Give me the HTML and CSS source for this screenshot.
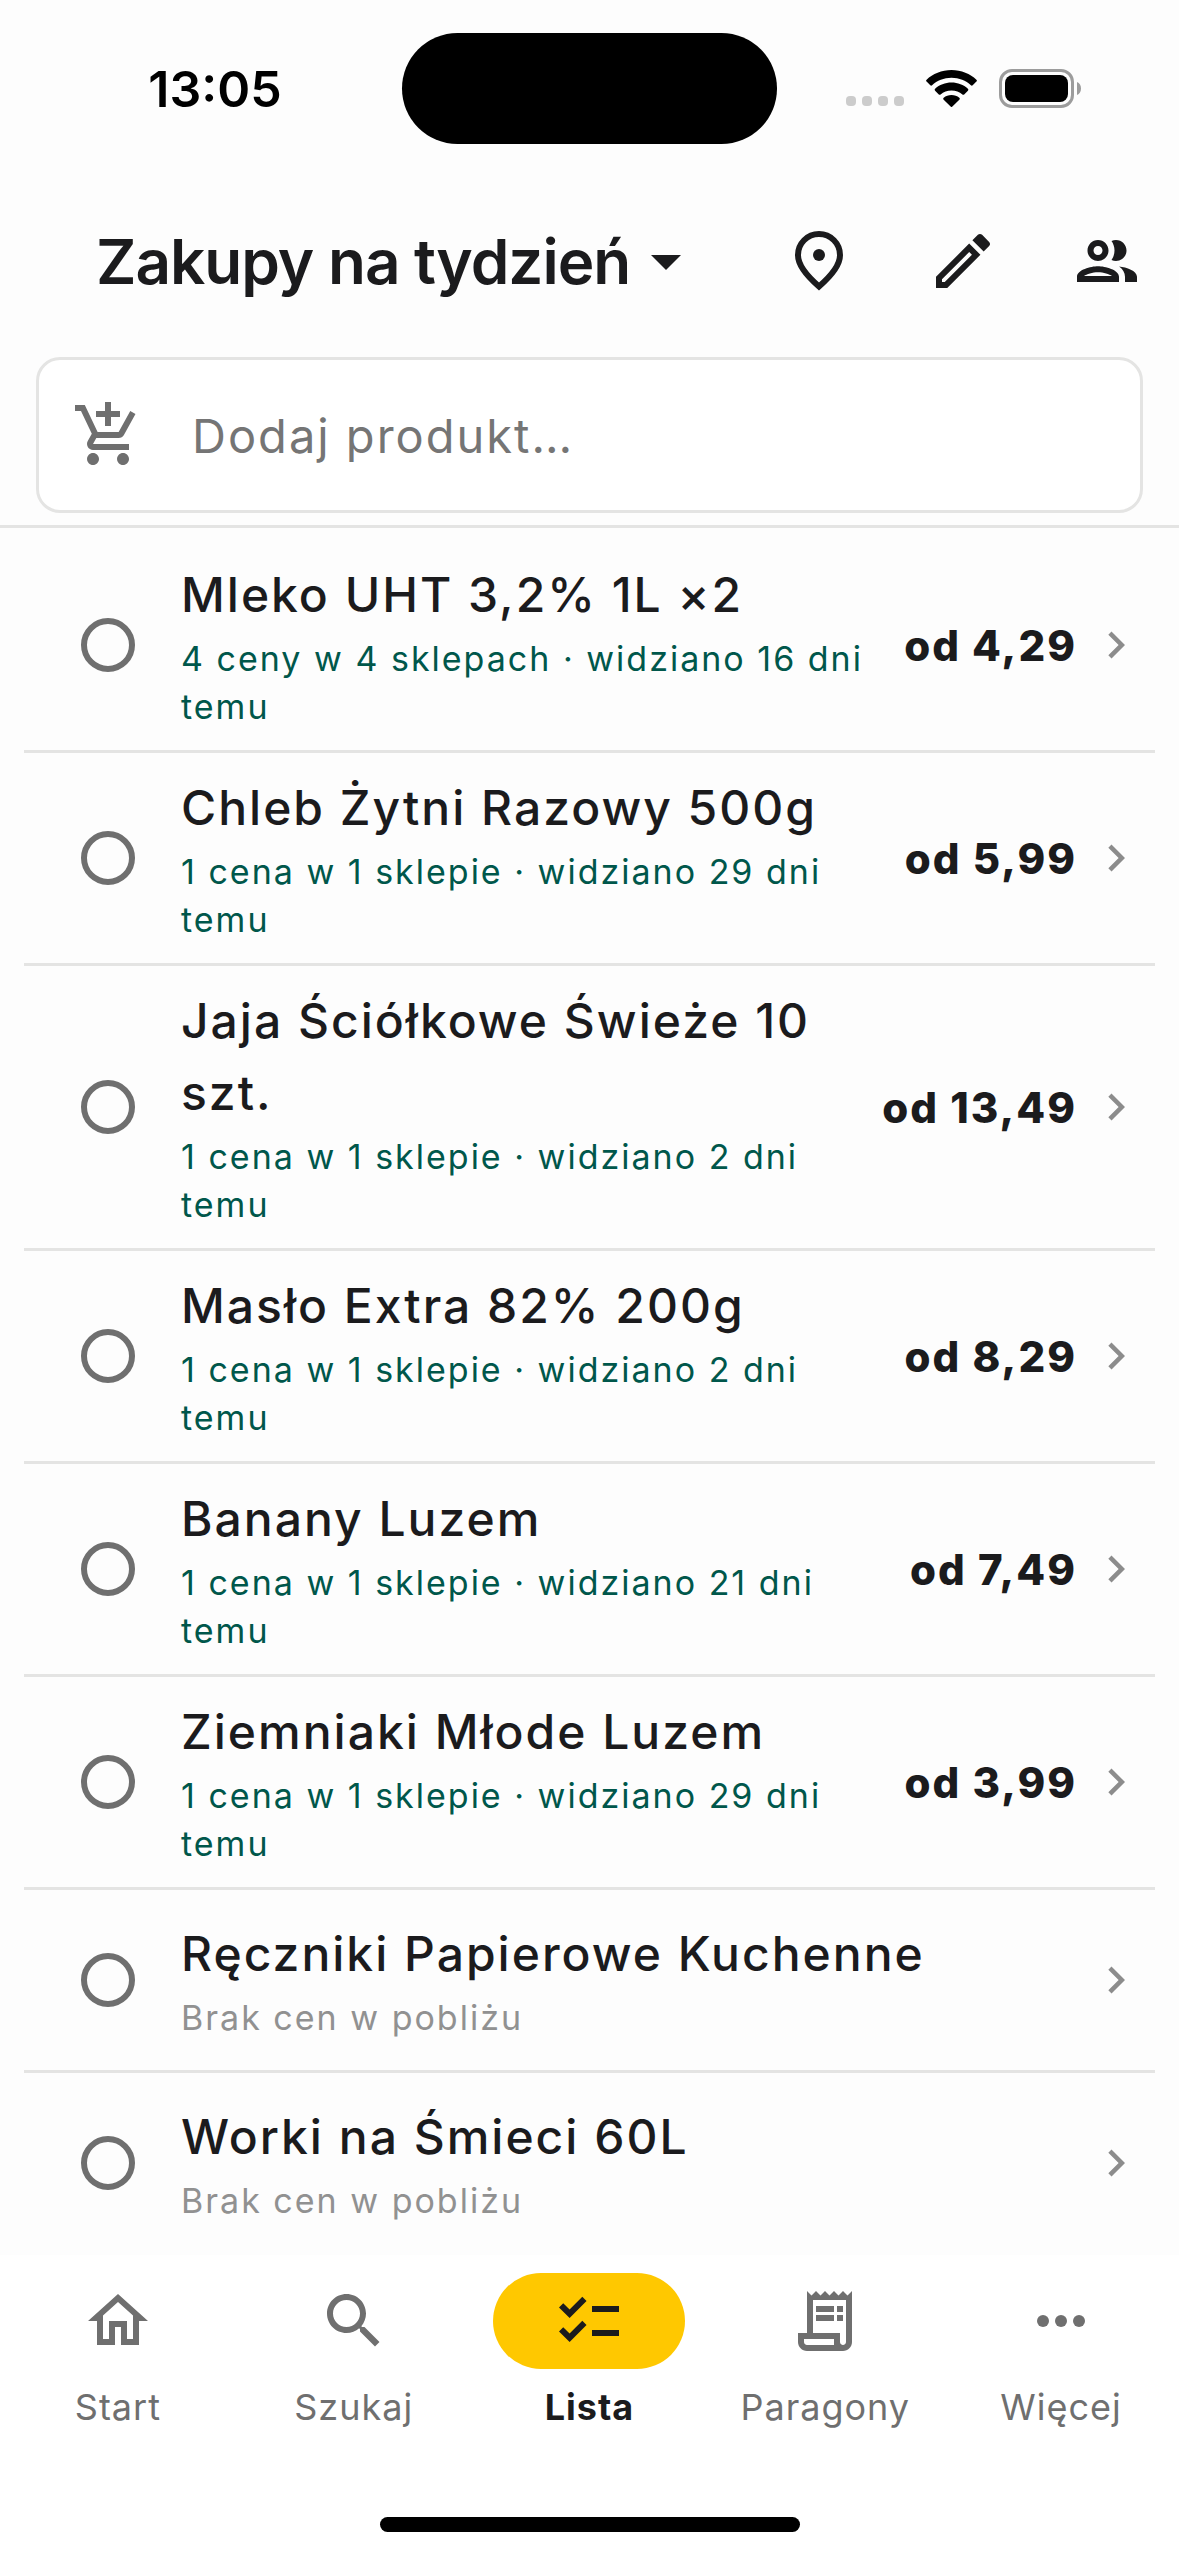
FILE: index.html
```
<!DOCTYPE html>
<html lang="pl">
<head>
  <meta charset="UTF-8">
  <title>Zakupy na tydzień</title>

  <meta name="viewport" content="width=device-width, initial-scale=1">
  <link rel="stylesheet" href="styles.css">
</head>
<body>

  <div class="status-bar">
    <span class="clock">13:05</span>
    <div class="island"></div>
    <div class="status-icons">
      <div class="signal"><i></i><i></i><i></i><i></i></div>
      <svg class="wifi" viewBox="0 0 51 37">
        <path d="M25.500 0C35.300 0 44.300 3.800 50.400 9.700a1.300 1.300 0 0 1 0 1.900l-3.700 3.700a1.300 1.300 0 0 1-1.800 0C39.900 10.600 33.100 7.800 25.500 7.800S11.100 10.600 6.100 15.300a1.300 1.300 0 0 1-1.800 0L.600 11.600a1.300 1.300 0 0 1 0-1.900C6.700 3.800 15.700 0 25.500 0z"/>
        <path d="M25.500 12.600c6.300 0 12.100 2.300 16.400 6.200a1.300 1.300 0 0 1 0 1.900l-3.700 3.700a1.300 1.300 0 0 1-1.800 0c-2.900-2.500-6.700-4-10.900-4s-8 1.500-10.900 4a1.300 1.300 0 0 1-1.800 0l-3.700-3.700a1.300 1.300 0 0 1 0-1.900c4.300-3.900 10.100-6.200 16.400-6.200z"/>
        <path d="M25.500 25c3 0 5.700 1 7.800 2.800a1.300 1.300 0 0 1 0 1.900l-6.900 6.900a1.300 1.300 0 0 1-1.800 0l-6.900-6.900a1.300 1.300 0 0 1 0-1.900c2.100-1.800 4.800-2.800 7.800-2.800z"/>
      </svg>
      <svg class="battery" viewBox="0 0 82 39">
        <rect x="1.500" y="1.500" width="72" height="36" rx="11.500" fill="none" stroke="#9c9c9c" stroke-width="3"/>
        <rect x="6" y="6" width="63" height="27" rx="8"/>
        <path d="M78 13c2.600 1 4 3.500 4 6.500S80.600 25 78 26z" fill="#9c9c9c"/>
      </svg>
    </div>
  </div>

  <header class="app-bar">
    <h1>
      <button class="list-picker">
        Zakupy na tydzień
        <svg class="icon" viewBox="0 0 24 24"><path d="M7 10l5 5 5-5z"/></svg>
      </button>
    </h1>
    <div class="actions">
      <button class="icon-btn" aria-label="Sklepy">
        <svg class="icon" viewBox="0 0 24 24">
          <path d="M12 3a7 7 0 0 1 7 7.100c0 3.100-2.500 6.500-7 10.400c-4.500-3.900-7-7.300-7-10.400A7 7 0 0 1 12 3z" fill="none" stroke="currentColor" stroke-width="2"/>
          <circle cx="12" cy="10" r="2"/>
        </svg>
      </button>
      <button class="icon-btn" aria-label="Edytuj">
        <svg class="icon" viewBox="0 0 24 24"><path d="M14.060 9.020l.92.92L5.920 19H5v-.92l9.060-9.060M17.660 3c-.25 0-.51.1-.7.29l-1.830 1.830 3.750 3.750 1.830-1.830c.39-.39.39-1.020 0-1.410l-2.340-2.340c-.2-.2-.45-.29-.71-.29zm-3.600 3.190L3 17.250V21h3.750L17.810 9.940l-3.750-3.750z"/></svg>
      </button>
      <button class="icon-btn" aria-label="Osoby">
        <svg class="icon" viewBox="0 0 24 24"><path d="M9 13.750c-2.340 0-7 1.170-7 3.500V19h14v-1.750c0-2.330-4.660-3.500-7-3.500zM4.340 17c.84-.58 2.870-1.250 4.660-1.250s3.820.67 4.660 1.250H4.340zM9 12c1.930 0 3.500-1.570 3.500-3.500S10.930 5 9 5 5.500 6.570 5.500 8.500 7.070 12 9 12zm0-5c.83 0 1.500.67 1.500 1.500S9.830 10 9 10s-1.500-.67-1.500-1.500S8.170 7 9 7zm7.040 6.810c1.160.84 1.960 1.960 1.960 3.440V19h4v-1.750c0-2.020-3.500-3.170-5.960-3.440zM15 12c1.930 0 3.500-1.570 3.500-3.500S16.930 5 15 5c-.54 0-1.040.13-1.500.35.63.89 1 1.980 1 3.150s-.37 2.260-1 3.150c.46.22.96.35 1.500.35z"/></svg>
      </button>
    </div>
  </header>

  <form class="add-bar">
    <label class="add-field">
      <svg class="icon" viewBox="0 0 24 24"><path d="M11 9h2V6h3V4h-3V1h-2v3H8v2h3v3zm-4 9c-1.100 0-1.990.9-1.990 2S5.900 22 7 22s2-.9 2-2-.9-2-2-2zm10 0c-1.100 0-1.990.9-1.990 2s.89 2 1.990 2 2-.9 2-2-.9-2-2-2zm-8.900-5h7.450c.75 0 1.410-.41 1.750-1.030l3.860-7.010L19.420 4l-3.870 7H8.530L4.270 2H1v2h2l3.600 7.590-1.350 2.440C4.520 15.370 5.480 17 7 17h12v-2H7l1.100-2z"/></svg>
      <input type="text" placeholder="Dodaj produkt…" aria-label="Dodaj produkt">
    </label>
  </form>

  <main class="list-wrap">
    <ul class="items">
      <li class="item">
        <input type="checkbox" id="item-1">
        <label class="text" for="item-1">
          <span class="name">Mleko UHT 3,2% 1L ×2</span>
          <span class="info">4 ceny w 4 sklepach · widziano 16 dni temu</span>
        </label>
        <span class="price">od 4,29</span>
        <button class="more" aria-label="Szczegóły"><svg viewBox="0 0 24 24"><path d="M10 6L8.590 7.410 13.170 12l-4.580 4.590L10 18l6-6z"/></svg></button>
      </li>
      <li class="item">
        <input type="checkbox" id="item-2">
        <label class="text" for="item-2">
          <span class="name">Chleb Żytni Razowy 500g</span>
          <span class="info">1 cena w 1 sklepie · widziano 29 dni temu</span>
        </label>
        <span class="price">od 5,99</span>
        <button class="more" aria-label="Szczegóły"><svg viewBox="0 0 24 24"><path d="M10 6L8.590 7.410 13.170 12l-4.580 4.590L10 18l6-6z"/></svg></button>
      </li>
      <li class="item">
        <input type="checkbox" id="item-3">
        <label class="text" for="item-3">
          <span class="name">Jaja Ściółkowe Świeże 10 szt.</span>
          <span class="info">1 cena w 1 sklepie · widziano 2 dni temu</span>
        </label>
        <span class="price">od 13,49</span>
        <button class="more" aria-label="Szczegóły"><svg viewBox="0 0 24 24"><path d="M10 6L8.590 7.410 13.170 12l-4.580 4.590L10 18l6-6z"/></svg></button>
      </li>
      <li class="item">
        <input type="checkbox" id="item-4">
        <label class="text" for="item-4">
          <span class="name">Masło Extra 82% 200g</span>
          <span class="info">1 cena w 1 sklepie · widziano 2 dni temu</span>
        </label>
        <span class="price">od 8,29</span>
        <button class="more" aria-label="Szczegóły"><svg viewBox="0 0 24 24"><path d="M10 6L8.590 7.410 13.170 12l-4.580 4.590L10 18l6-6z"/></svg></button>
      </li>
      <li class="item">
        <input type="checkbox" id="item-5">
        <label class="text" for="item-5">
          <span class="name">Banany Luzem</span>
          <span class="info">1 cena w 1 sklepie · widziano 21 dni temu</span>
        </label>
        <span class="price">od 7,49</span>
        <button class="more" aria-label="Szczegóły"><svg viewBox="0 0 24 24"><path d="M10 6L8.590 7.410 13.170 12l-4.580 4.590L10 18l6-6z"/></svg></button>
      </li>
      <li class="item">
        <input type="checkbox" id="item-6">
        <label class="text" for="item-6">
          <span class="name">Ziemniaki Młode Luzem</span>
          <span class="info">1 cena w 1 sklepie · widziano 29 dni temu</span>
        </label>
        <span class="price">od 3,99</span>
        <button class="more" aria-label="Szczegóły"><svg viewBox="0 0 24 24"><path d="M10 6L8.590 7.410 13.170 12l-4.580 4.590L10 18l6-6z"/></svg></button>
      </li>
      <li class="item">
        <input type="checkbox" id="item-7">
        <label class="text" for="item-7">
          <span class="name">Ręczniki Papierowe Kuchenne</span>
          <span class="info none">Brak cen w pobliżu</span>
        </label>
        <button class="more" aria-label="Szczegóły"><svg viewBox="0 0 24 24"><path d="M10 6L8.590 7.410 13.170 12l-4.580 4.590L10 18l6-6z"/></svg></button>
      </li>
      <li class="item">
        <input type="checkbox" id="item-8">
        <label class="text" for="item-8">
          <span class="name">Worki na Śmieci 60L</span>
          <span class="info none">Brak cen w pobliżu</span>
        </label>
        <button class="more" aria-label="Szczegóły"><svg viewBox="0 0 24 24"><path d="M10 6L8.590 7.410 13.170 12l-4.580 4.590L10 18l6-6z"/></svg></button>
      </li>
    </ul>
  </main>

  <nav class="tabs">
    <div class="tab-row">
      <a class="tab" href="#start">
        <span class="pill"><svg class="icon" viewBox="0 0 24 24"><path d="M12 5.690l5 4.500V18h-2v-6H9v6H7v-7.810l5-4.500M12 3L2 12h3v8h6v-6h2v6h6v-8h3L12 3z"/></svg></span>
        Start
      </a>
      <a class="tab" href="#szukaj">
        <span class="pill"><svg class="icon" viewBox="0 0 24 24"><path d="M15.500 14h-.79l-.28-.27C15.410 12.590 16 11.110 16 9.500 16 5.910 13.090 3 9.500 3S3 5.910 3 9.500 5.910 16 9.500 16c1.610 0 3.090-.59 4.230-1.570l.27.28v.79l5 4.990L20.490 19l-4.990-5zm-6 0C7.010 14 5 11.990 5 9.500S7.010 5 9.500 5 14 7.010 14 9.500 11.990 14 9.500 14z"/></svg></span>
        Szukaj
      </a>
      <a class="tab active" href="#lista">
        <span class="pill"><svg class="icon" viewBox="0 0 24 24"><path d="M22 7h-9v2h9V7zm0 8h-9v2h9v-2zM5.540 11L2 7.460l1.410-1.410 2.120 2.120 4.240-4.240 1.410 1.410L5.540 11zm0 8L2 15.460l1.410-1.410 2.120 2.120 4.240-4.240 1.410 1.410L5.540 19z"/></svg></span>
        Lista
      </a>
      <a class="tab" href="#paragony">
        <span class="pill"><svg class="icon" viewBox="0 0 24 24"><path d="M19.500 3.500L18 2l-1.500 1.500L15 2l-1.500 1.500L12 2l-1.500 1.500L9 2 7.500 3.500 6 2v14H3v3c0 1.660 1.340 3 3 3h12c1.660 0 3-1.340 3-3V2l-1.500 1.500zM15 20H6c-.55 0-1-.45-1-1v-1h10v2zm4-1c0 .55-.45 1-1 1s-1-.45-1-1v-3H8V5h11v14zM9 7h6v2H9zm7 0h2v2h-2zm-7 3h6v2H9zm7 0h2v2h-2z"/></svg></span>
        Paragony
      </a>
      <a class="tab" href="#wiecej">
        <span class="pill"><svg class="icon" viewBox="0 0 24 24"><circle cx="6" cy="12" r="2"/><circle cx="12" cy="12" r="2"/><circle cx="18" cy="12" r="2"/></svg></span>
        Więcej
      </a>
    </div>
    <div class="home-bar"></div>
  </nav>

</body>
</html>
```
FILE: styles.css
```
* {
  box-sizing: border-box;
}

body {
  margin: 0;
  height: 100vh;
  display: flex;
  flex-direction: column;
  overflow: hidden;
  background: #fdfdfd;
  color: #1b1b1d;
  font-family: Inter, "Noto Sans", sans-serif;
}

button {
  padding: 0;
  border: 0;
  background: none;
  color: inherit;
  font: inherit;
  cursor: pointer;
}

svg {
  display: block;
  flex: none;
  fill: currentColor;
}

.icon {
  width: 72px;
  height: 72px;
}

/* status bar */
.status-bar {
  display: grid;
  grid-template-columns: 1fr auto 1fr;
  align-items: center;
  height: 177px;
  flex: none;
  color: #000;
}

.clock {
  padding-left: 28px;
  font-size: 50px;
  font-weight: 600;
  text-align: center;
}

.island {
  width: 375px;
  height: 111px;
  border-radius: 56px;
  background: #000;
}

.status-icons {
  display: flex;
  align-items: center;
  justify-content: flex-end;
  padding-right: 98px;
}

.signal {
  display: flex;
  gap: 6px;
  margin: 24px 22px 0 0;
}

.signal i {
  width: 10px;
  height: 10px;
  border-radius: 4px;
  background: #ccc;
}

.wifi {
  width: 51px;
  height: 37px;
  margin-right: 22px;
}

.battery {
  width: 82px;
  height: 39px;
}

/* app bar */
.app-bar {
  display: flex;
  align-items: center;
  justify-content: space-between;
  height: 168px;
  flex: none;
  padding: 0 36px 0 96px;
}

h1 {
  margin: 0;
  font-size: 62px;
  font-weight: 600;
  letter-spacing: -1px;
}

.list-picker {
  display: flex;
  align-items: center;
  letter-spacing: inherit;
}

.actions {
  display: flex;
  gap: 72px;
}

/* add product */
.add-bar {
  margin: 0;
  padding: 12px 36px;
  flex: none;
  border-bottom: 3px solid #e4e4e3;
}

.add-field {
  display: flex;
  align-items: center;
  gap: 48px;
  height: 156px;
  padding: 0 33px;
  border: 3px solid #e4e4e3;
  border-radius: 24px;
  background: #fff;
  color: #6f6f6f;
}

.add-field input {
  flex: 1;
  min-width: 0;
  padding: 0;
  border: 0;
  outline: 0;
  background: none;
  color: #1b1b1d;
  font: 400 47px Inter, "Noto Sans", sans-serif;
  letter-spacing: 2px;
}

.add-field input::placeholder {
  color: #757575;
}

/* list */
.list-wrap {
  flex: 1;
  min-height: 0;
  overflow: hidden;
}

.items {
  list-style: none;
  margin: 0;
  padding: 12px 24px 0;
}

.item {
  display: flex;
  align-items: center;
  min-height: 183px;
  padding: 19px 12px 19px 57px;
  border-bottom: 3px solid #e4e4e3;
}

.item:last-child {
  border-bottom-color: transparent;
}

.item input {
  appearance: none;
  flex: none;
  width: 54px;
  height: 54px;
  margin: 0 46px 0 0;
  border: 6px solid #6f6f6f;
  border-radius: 50%;
}

.item input:checked {
  background: #00574b;
}

.text {
  flex: 1;
  min-width: 0;
}

.name,
.info {
  display: block;
}

.name {
  font-size: 48px;
  font-weight: 500;
  line-height: 72px;
  letter-spacing: 2px;
}

.info {
  padding-top: 4px;
  color: #00574b;
  font-size: 34px;
  line-height: 48px;
  letter-spacing: 2px;
}

.info.none {
  color: #919191;
}

.price {
  margin: 0 12px 0 28px;
  font-size: 42px;
  font-weight: 800;
  letter-spacing: 2px;
  white-space: nowrap;
}

.more {
  color: #8c8c8c;
}

.more svg {
  width: 54px;
  height: 54px;
}

/* bottom tabs */
.tabs {
  flex: none;
  background: #fff;
}

.tab-row {
  display: flex;
  padding-top: 18px;
}

.tab {
  flex: 1;
  display: flex;
  flex-direction: column;
  align-items: center;
  gap: 11px;
  color: #6f6f6f;
  font-size: 36px;
  font-weight: 400;
  line-height: 54px;
  letter-spacing: 1px;
  text-decoration: none;
}

.tab.active {
  color: #1b1b1d;
  font-weight: 700;
}

.pill {
  display: flex;
  align-items: center;
  justify-content: center;
  width: 192px;
  height: 96px;
  border-radius: 48px;
}

.active .pill {
  background: #ffc800;
}

.home-bar {
  width: 420px;
  height: 15px;
  margin: 83px auto 24px;
  border-radius: 8px;
  background: #000;
}
```
